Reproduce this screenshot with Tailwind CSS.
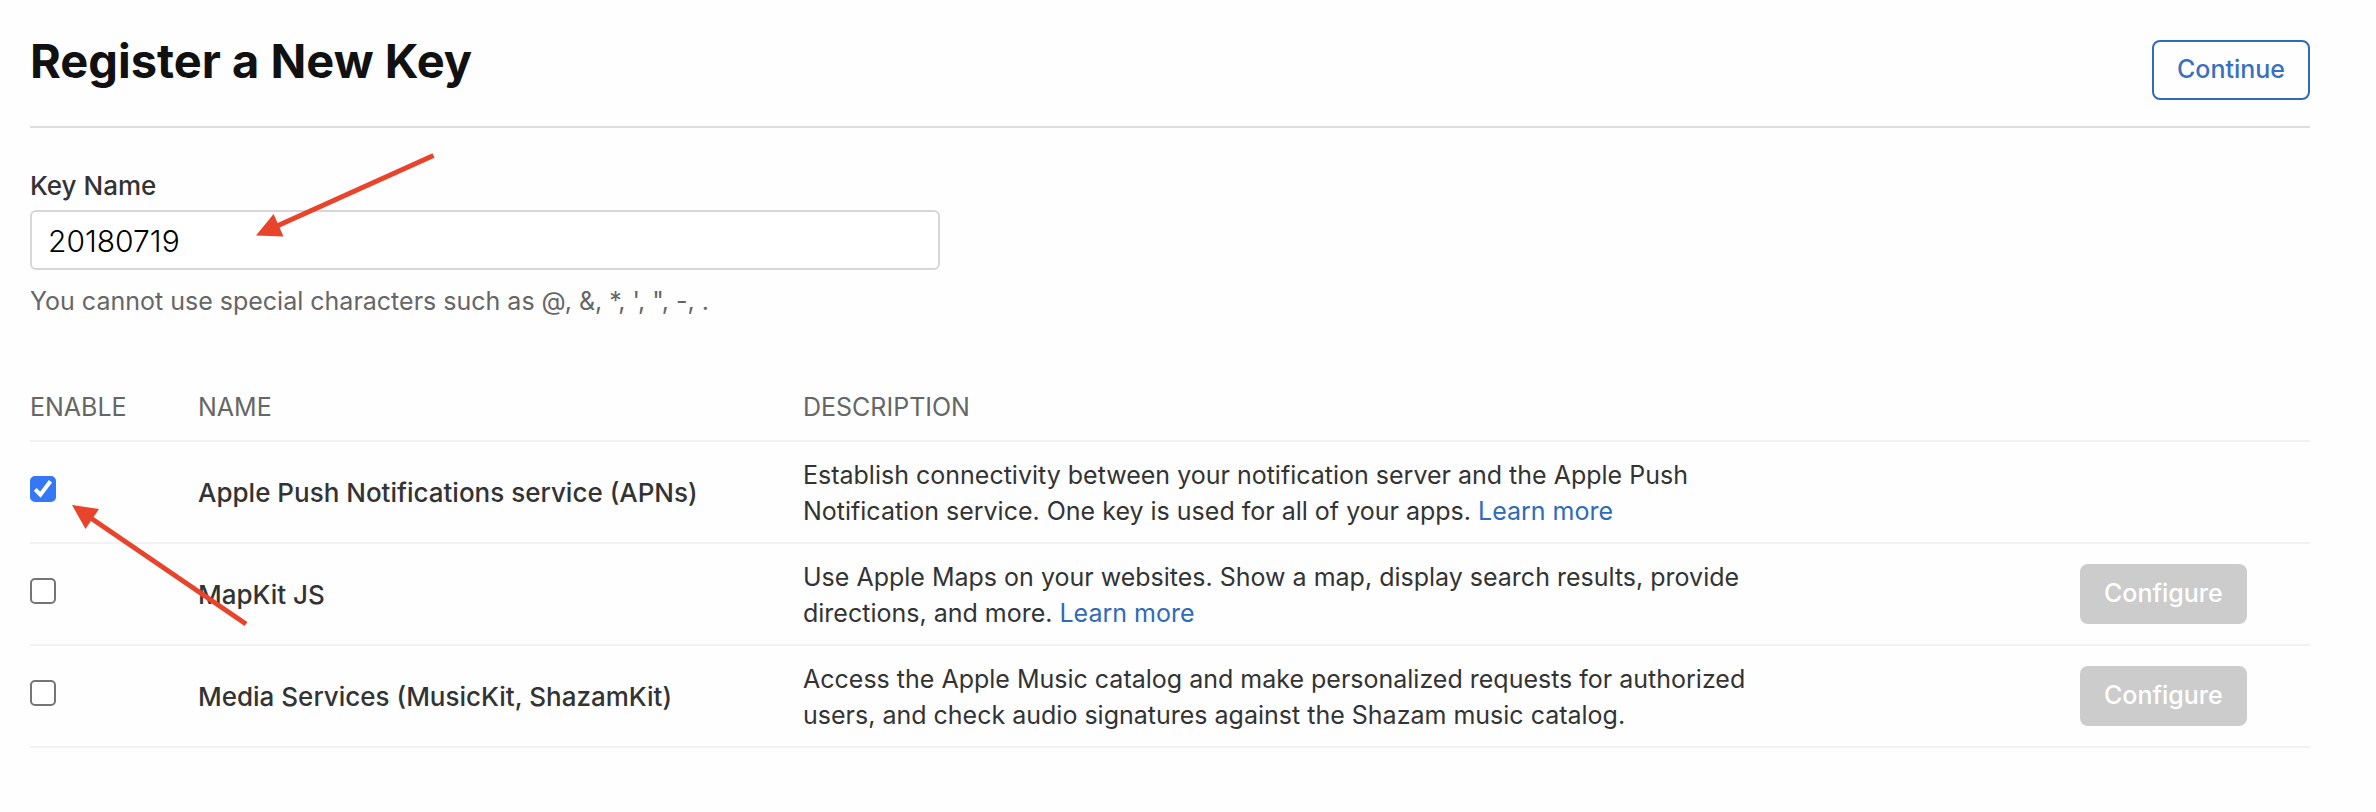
<!DOCTYPE html>
<html lang="en">
<head>
<meta charset="utf-8">
<meta name="viewport" content="width=device-width, initial-scale=1">
<title>Register a New Key</title>
<script src="https://cdn.jsdelivr.net/npm/@tailwindcss/browser@4"></script>
</head>
<body class="relative bg-[#fefefe] font-['Inter',sans-serif] text-[25px] leading-9 text-[#333]">
<main class="pt-10 pr-[66px] pb-16 pl-[30px]">
  <header class="flex items-start justify-between border-b-2 border-[#ddd] pb-[26px]">
    <h1 class="text-[47px] leading-[42px] font-bold text-[#111]">Register a New Key</h1>
    <button type="button" class="h-[60px] rounded-lg border-2 border-[#2e6bb8] px-[23px] pb-0.5 font-medium text-[#3a6fc0]">Continue</button>
  </header>

  <form class="pt-10">
    <label for="key-name" class="block pb-1.5 text-[26px] font-medium">Key Name</label>
    <input id="key-name" type="text" value="20180719" class="block h-[60px] w-[910px] max-w-full rounded-md border-2 border-[#d6d6d6] bg-white px-4 pt-0.5 text-[30px] font-light text-black">
    <p class="pt-[13px] text-[#666]">You cannot use special characters such as @, &amp;, *, ', ", -, .</p>

    <table class="mt-[70px] w-full table-fixed text-left">
      <colgroup><col class="w-[168px]"><col class="w-[605px]"><col><col class="w-[230px]"></colgroup>
      <thead class="text-[#666]">
        <tr class="border-b-2 border-[#f2f2f2]">
          <th scope="col" class="pb-[15px] font-normal">ENABLE</th>
          <th scope="col" class="pb-[15px] font-normal">NAME</th>
          <th scope="col" class="pb-[15px] font-normal">DESCRIPTION</th>
          <td></td>
        </tr>
      </thead>
      <tbody>
        <tr class="h-[102px] border-b-2 border-[#f2f2f2]">
          <td><span class="relative mb-1.5 block size-[26px]"><input id="apns" type="checkbox" checked class="block size-[26px] appearance-none rounded-[5px] border-2 border-[#757575] bg-white checked:border-[#3478f6] checked:bg-[#3478f6]"><svg class="pointer-events-none absolute inset-0" viewBox="0 0 26 26" fill="none" stroke="#fff" stroke-width="4"><path d="M5.200 13.400 10.400 18.600 20.500 5.200"/></svg></span></td>
          <td class="pt-0.5"><label for="apns" class="text-[26px] font-medium">Apple Push Notifications service (APNs)</label></td>
          <td class="pt-0.5"><p class="max-w-[970px]">Establish connectivity between your notification server and the Apple Push Notification service. One key is used for all of your apps. <a href="#" class="inline-block text-[#2e6bb8]">Learn more</a></p></td>
          <td></td>
        </tr>
        <tr class="h-[102px] border-b-2 border-[#f2f2f2]">
          <td><input id="mapkit" type="checkbox" class="mb-1.5 block size-[26px] appearance-none rounded-[5px] border-2 border-[#757575] bg-white checked:bg-[#3478f6]"></td>
          <td class="pt-0.5"><label for="mapkit" class="text-[26px] font-medium">MapKit JS</label></td>
          <td class="pt-0.5"><p class="max-w-[970px]">Use Apple Maps on your websites. Show a map, display search results, provide directions, and more. <a href="#" class="inline-block text-[#2e6bb8]">Learn more</a></p></td>
          <td><button type="button" disabled class="block h-[60px] rounded-lg bg-[#ccc] px-6 pb-0.5 font-medium text-white">Configure</button></td>
        </tr>
        <tr class="h-[102px] border-b-2 border-[#f2f2f2]">
          <td><input id="media" type="checkbox" class="mb-1.5 block size-[26px] appearance-none rounded-[5px] border-2 border-[#757575] bg-white checked:bg-[#3478f6]"></td>
          <td class="pt-0.5"><label for="media" class="text-[26px] font-medium">Media Services (MusicKit, ShazamKit)</label></td>
          <td class="pt-0.5"><p class="max-w-[970px]">Access the Apple Music catalog and make personalized requests for authorized users, and check audio signatures against the Shazam music catalog.</p></td>
          <td><button type="button" disabled class="block h-[60px] rounded-lg bg-[#ccc] px-6 pb-0.5 font-medium text-white">Configure</button></td>
        </tr>
      </tbody>
    </table>
  </form>
</main>

<!-- Annotation arrows -->
<svg class="pointer-events-none absolute top-0 left-0" width="450" height="640" viewBox="0 0 450 640" fill="#e8432b" stroke="none" aria-hidden="true">
  <path d="M433.500 155.500 277 226" stroke="#e8432b" stroke-width="5"/>
  <path d="M256 235.500 273.600 214 283.500 236.500Z"/>
  <path d="M246 624 90 517.500" stroke="#e8432b" stroke-width="5"/>
  <path d="M72 505 99 509 85.500 529Z"/>
</svg>
</body>
</html>
